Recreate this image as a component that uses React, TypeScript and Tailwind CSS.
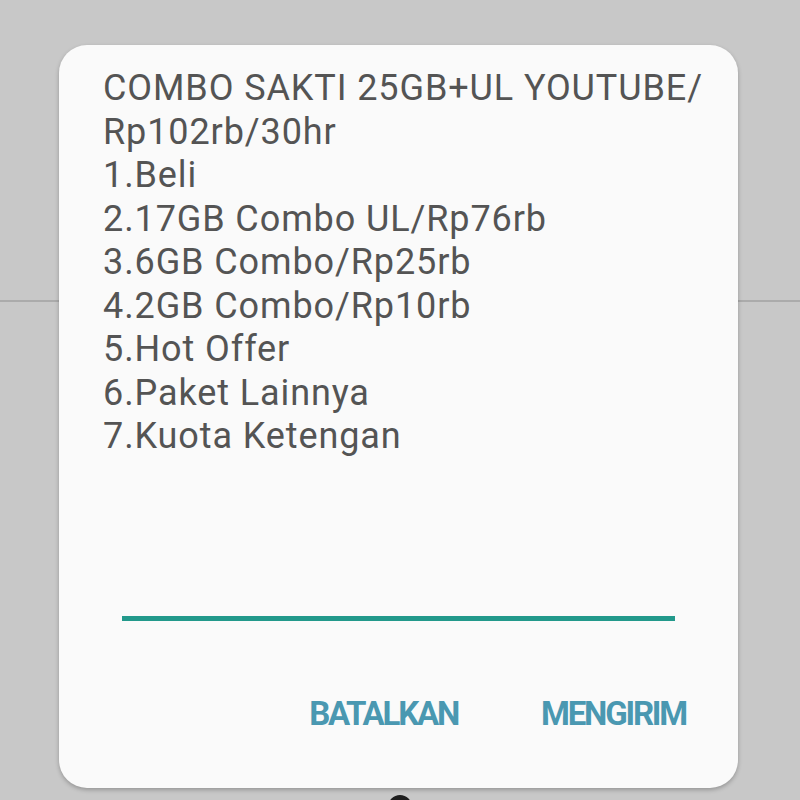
import React from 'react';

const MENU_LINES = [
  'COMBO SAKTI 25GB+UL YOUTUBE/',
  'Rp102rb/30hr',
  '1.Beli',
  '2.17GB Combo UL/Rp76rb',
  '3.6GB Combo/Rp25rb',
  '4.2GB Combo/Rp10rb',
  '5.Hot Offer',
  '6.Paket Lainnya',
  '7.Kuota Ketengan',
];

export default function App() {
  return (
    <div className="relative h-[800px] w-[800px] overflow-hidden bg-[#c8c8c8] font-['Roboto',sans-serif]">
      {/* halaman di belakang dialog */}
      <div className="pt-[300px]">
        <div className="h-[2px] bg-[#ababab]" />
      </div>
      <div className="absolute left-[388px] top-[795px] h-[26px] w-[24px] rounded-full bg-[#1e1e1e]" />

      {/* dialog USSD */}
      <div className="absolute left-[59px] top-[45px] flex h-[743px] w-[679px] flex-col rounded-[28px] bg-[#fafafa] shadow-[0_2px_4px_rgba(0,0,0,0.25)]">
        <div className="pl-[44px] pr-[10px] pt-[22px] text-[36px] leading-[43.5px] tracking-[0.9px] text-[#545454]">
          {MENU_LINES.map((line) => (
            <div key={line} className="whitespace-nowrap">{line}</div>
          ))}
        </div>
        <div className="mt-[157px] px-[63px]">
          <div className="h-[5px] bg-[#22998b]" />
        </div>
        <div className="mt-[68px] flex justify-end gap-[83px] pr-[52px] text-[33px] font-bold tracking-[-2.2px] text-[#4a98b1]">
          <button type="button">BATALKAN</button>
          <button type="button">MENGIRIM</button>
        </div>
      </div>
    </div>
  );
}
